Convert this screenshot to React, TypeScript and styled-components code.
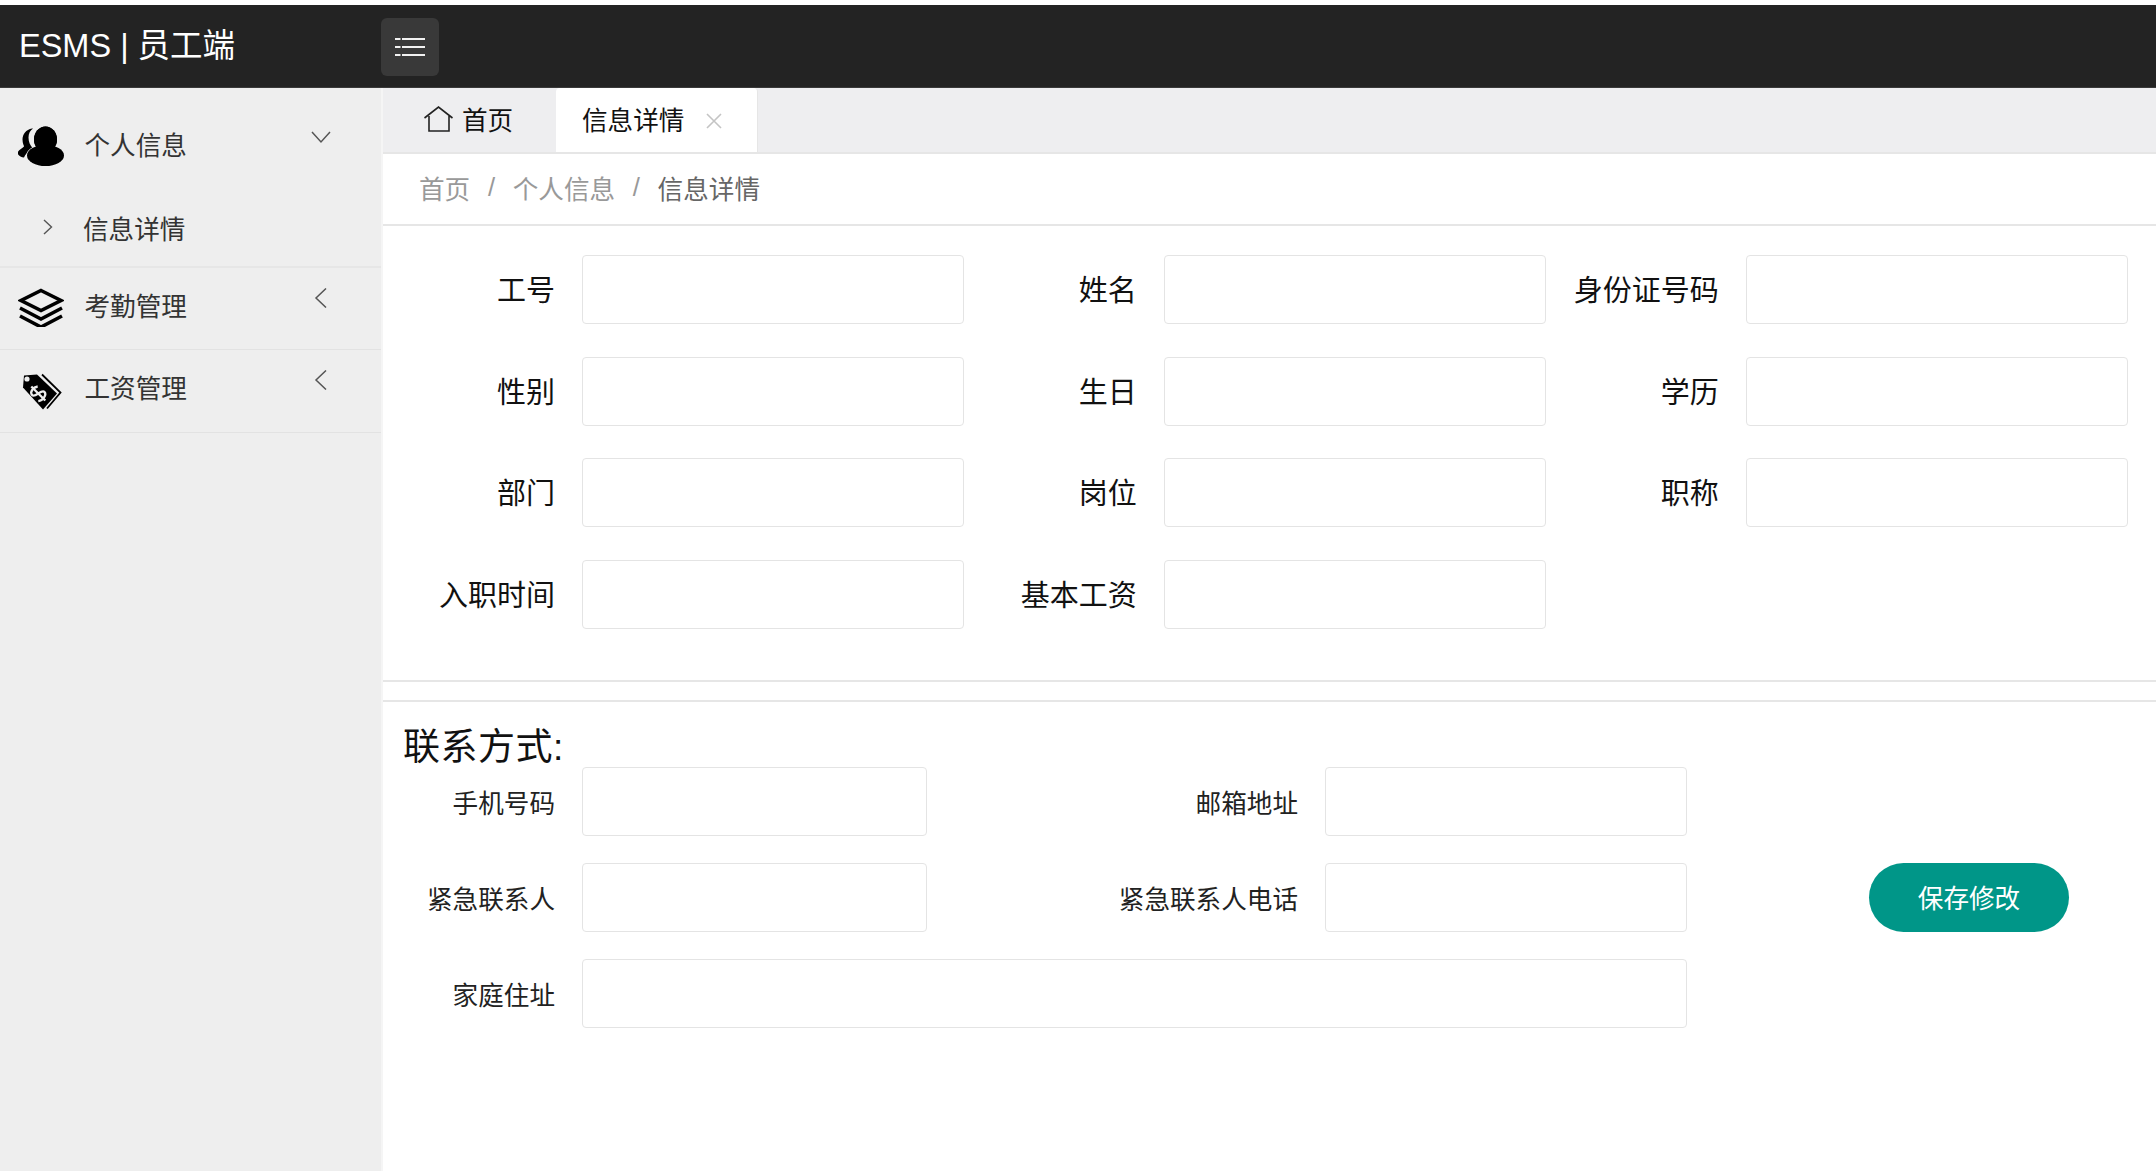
import React from "react";
import styled, { createGlobalStyle } from "styled-components";

const FONT = `"Liberation Sans", "Noto Sans CJK SC", sans-serif`;

const Global = createGlobalStyle`
  html, body { margin: 0; padding: 0; background: #fff; }
  body { font-family: ${FONT}; }
  * { box-sizing: border-box; }
`;

const Page = styled.div`
  width: 2156px;
  height: 1171px;
  padding-top: 5px;
  display: flex;
  flex-direction: column;
  overflow: hidden;
`;

const Header = styled.header`
  height: 83px;
  flex: none;
  background: #232323;
  display: flex;
  align-items: center;
  border-bottom: 1px solid #3a3a3a;
`;

const Brand = styled.div`
  width: 381px;
  padding: 0 0 8px 19px;
  color: #fff;
  font-size: 32.5px;
  white-space: nowrap;
`;

const MenuButton = styled.button`
  width: 58px;
  height: 58px;
  margin-top: 2px;
  padding: 0;
  border: 0;
  border-radius: 6px;
  background: #393939;
  display: flex;
  align-items: center;
  justify-content: center;
`;

const Body = styled.div`
  flex: 1;
  display: flex;
  min-height: 0;
`;

const Sidebar = styled.aside`
  width: 383px;
  flex: none;
  background: #eeeeee;
  border-right: 2px solid #f5f5f5;
`;

const NavGroup = styled.div<{ $thick?: boolean }>`
  border-bottom: ${(p) => (p.$thick ? "2px solid #e6e6e6" : "1px solid #e2e2e2")};
`;

const NavItem = styled.div<{ $h: number; $pb: number }>`
  height: ${(p) => p.$h}px;
  padding: 0 50px ${(p) => p.$pb}px 18px;
  display: flex;
  align-items: center;
  color: #333;
  font-size: 25.6px;
`;

const NavIcon = styled.svg`
  width: 46px;
  height: 46px;
  flex: none;
  margin-right: 20.5px;
`;

const NavChevron = styled.svg`
  width: 20px;
  height: 20px;
  flex: none;
  margin-left: auto;
  margin-bottom: 13px;
`;

const SubItem = styled.div`
  height: 65px;
  padding: 0 0 13px 43px;
  display: flex;
  align-items: center;
  color: #333;
  font-size: 25.6px;
`;

const SubChevron = styled.svg`
  width: 10px;
  height: 16px;
  flex: none;
  margin-right: 30px;
`;

const Main = styled.main`
  flex: 1;
  min-width: 0;
  display: flex;
  flex-direction: column;
`;

const TabBar = styled.div`
  height: 66px;
  flex: none;
  background: #eeeef0;
  border-bottom: 2px solid #e6e6e6;
  display: flex;
  align-items: flex-end;
`;

const HomeTab = styled.div`
  width: 173px;
  height: 64px;
  padding: 0 0 3px 41px;
  display: flex;
  align-items: center;
  gap: 9px;
  color: #111;
  font-size: 25.6px;
`;

const ActiveTab = styled.div`
  width: 202px;
  height: 64px;
  padding: 0 0 3px 26px;
  background: #fff;
  border-radius: 4px 4px 0 0;
  border-right: 1px solid #e6e6e6;
  display: flex;
  align-items: center;
  color: #111;
  font-size: 25.6px;
`;

const CloseIcon = styled.svg`
  width: 16px;
  height: 16px;
  margin: 4px 0 0 22px;
  flex: none;
`;

const Breadcrumb = styled.nav`
  height: 72px;
  flex: none;
  padding: 0 0 3px 36px;
  border-bottom: 2px solid #e6e6e6;
  display: flex;
  align-items: center;
  color: #999;
  font-size: 25.6px;
`;

const Crumb = styled.span<{ $current?: boolean }>`
  color: ${(p) => (p.$current ? "#666" : "#999")};
`;

const Sep = styled.span`
  width: 42.5px;
  text-align: center;
  color: #999;
`;

const InfoGrid = styled.section`
  padding-top: 29px;
  display: grid;
  grid-template-columns: repeat(3, 581.3px);
  column-gap: 0.55px;
  grid-auto-rows: 69px;
  row-gap: 32.67px;
`;

const Field = styled.div`
  display: flex;
  align-items: center;
  min-width: 0;
`;

const FieldLabel = styled.label`
  width: 172px;
  margin-right: 27px;
  padding-bottom: 3px;
  flex: none;
  text-align: right;
  color: #111;
  font-size: 29px;
  white-space: nowrap;
`;

const TextInput = styled.input`
  display: block;
  flex: 1;
  min-width: 0;
  width: 100%;
  height: 100%;
  padding: 0 14px;
  border: 1px solid #e4e4e4;
  border-radius: 4px;
  background: #fff;
  outline: none;
`;

const Rule = styled.hr<{ $top: number }>`
  height: 2px;
  margin: ${(p) => p.$top}px 0 0;
  border: 0;
  background: #e6e6e6;
`;

const ContactTitle = styled.h2`
  margin: 24px 0 0 20px;
  height: 41px;
  line-height: 43px;
  color: #111;
  font-size: 37px;
  font-weight: 400;
  letter-spacing: 0.5px;
  white-space: nowrap;
`;

const ContactGrid = styled.section`
  display: grid;
  grid-template-columns: 172px 345px 344px 362px 1fr;
  grid-auto-rows: 69px;
  column-gap: 27px;
  row-gap: 27px;
  align-items: stretch;
`;

const ContactLabel = styled.label`
  align-self: center;
  padding-bottom: 1px;
  text-align: right;
  color: #222;
  font-size: 25.6px;
  white-space: nowrap;
`;

const WideInput = styled(TextInput)`
  grid-column: 2 / 5;
`;

const SaveCell = styled.div`
  padding-left: 155px;
`;

const SaveButton = styled.button`
  width: 200px;
  height: 69px;
  padding: 0 0 2px;
  border: 0;
  border-radius: 35px;
  background: #009688;
  color: #fff;
  font-family: ${FONT};
  font-size: 25.6px;
`;

const Spacer = styled.div``;

const info = ["工号", "姓名", "身份证号码", "性别", "生日", "学历", "部门", "岗位", "职称", "入职时间", "基本工资"];

const Chevron = ({ dir }: { dir: "down" | "left" }) => (
  <NavChevron viewBox="0 0 20 20">
    <polyline
      points={dir === "down" ? "1,5 10,15 19,5" : "15,0.5 5,10 15,19.5"}
      fill="none"
      stroke="#555"
      strokeWidth="1.5"
    />
  </NavChevron>
);

export default function App() {
  return (
    <Page>
      <Global />
      <Header>
        <Brand>ESMS | 员工端</Brand>
        <MenuButton aria-label="menu">
          <svg width="30" height="18" viewBox="0 0 30 18">
            <g fill="#f2f2f2">
              <rect x="0" y="0" width="5.5" height="2" />
              <rect x="7" y="0" width="23" height="2" />
              <rect x="0" y="8" width="5.5" height="2" />
              <rect x="7" y="8" width="23" height="2" />
              <rect x="0" y="16" width="5.5" height="2" />
              <rect x="7" y="16" width="23" height="2" />
            </g>
          </svg>
        </MenuButton>
      </Header>
      <Body>
        <Sidebar>
          <NavGroup $thick>
            <NavItem $h={113} $pb={3}>
              <NavIcon viewBox="18 120.5 46 46">
                <path d="M32 129C26 130 22.5 135 22.5 140C22.5 144 24 146 24 147C22 149 17.5 151 17.5 154C18.5 156 21 158 24 158C25 155 28 152 33 149C30 146 28.5 142 28.5 138C28.5 134 30 131 33 129Z" />
                <g stroke="#eee" strokeWidth="1.5" paintOrder="stroke">
                  <ellipse cx="45.5" cy="140" rx="11.5" ry="13" />
                  <ellipse cx="45.5" cy="156" rx="18.5" ry="10.5" />
                </g>
                <ellipse cx="45.5" cy="140" rx="11.5" ry="13" />
              </NavIcon>
              个人信息
              <Chevron dir="down" />
            </NavItem>
            <SubItem>
              <SubChevron viewBox="0 0 10 16">
                <polyline points="1,1 8.5,8 1,15" fill="none" stroke="#555" strokeWidth="1.4" />
              </SubChevron>
              信息详情
            </SubItem>
          </NavGroup>
          <NavGroup>
            <NavItem $h={81} $pb={9}>
              <NavIcon viewBox="18 281 46 46">
                <g fill="none" stroke="#000" strokeWidth="3.6">
                  <polygon points="41,290.5 61,300.5 41,310.5 21,300.5" />
                  <polyline points="20,308 41,319 62,308" />
                  <polyline points="20,316 41,327 62,316" />
                </g>
              </NavIcon>
              考勤管理
              <Chevron dir="left" />
            </NavItem>
          </NavGroup>
          <NavGroup>
            <NavItem $h={82} $pb={9}>
              <NavIcon viewBox="18 363.5 46 46">
                <path d="M24 375L37 374L57 393L43 409L23 387Z" />
                <polyline points="42,374 60.5,392 47,408" fill="none" stroke="#000" strokeWidth="1.8" />
                <circle cx="27" cy="378.5" r="2.6" fill="#eee" />
                <path
                  transform="translate(38.3 393) rotate(-45) scale(0.9)"
                  d="M5 -6C1 -9 -6 -8 -6 -3.5C-6 1 6 -1 6 3.5C6 8 -2 9 -6 6M0 -11V11"
                  fill="none"
                  stroke="#eee"
                  strokeWidth="2.6"
                />
              </NavIcon>
              工资管理
              <Chevron dir="left" />
            </NavItem>
          </NavGroup>
        </Sidebar>
        <Main>
          <TabBar>
            <HomeTab>
              <svg width="29" height="26" viewBox="0 0 29 26">
                <path
                  d="M0.5 12L14.5 1L28.5 12M5 10V25H25V10"
                  fill="none"
                  stroke="#222"
                  strokeWidth="1.6"
                />
              </svg>
              首页
            </HomeTab>
            <ActiveTab>
              信息详情
              <CloseIcon viewBox="0 0 16 16">
                <path d="M1 1L15 15M15 1L1 15" stroke="#c4c4c4" strokeWidth="1.6" fill="none" />
              </CloseIcon>
            </ActiveTab>
          </TabBar>
          <Breadcrumb>
            <Crumb>首页</Crumb>
            <Sep>/</Sep>
            <Crumb>个人信息</Crumb>
            <Sep>/</Sep>
            <Crumb $current>信息详情</Crumb>
          </Breadcrumb>
          <InfoGrid>
            {info.map((label) => (
              <Field key={label}>
                <FieldLabel>{label}</FieldLabel>
                <TextInput />
              </Field>
            ))}
          </InfoGrid>
          <Rule $top={51.5} />
          <Rule $top={18} />
          <ContactTitle>联系方式:</ContactTitle>
          <ContactGrid>
            <ContactLabel>手机号码</ContactLabel>
            <TextInput />
            <ContactLabel>邮箱地址</ContactLabel>
            <TextInput />
            <Spacer />
            <ContactLabel>紧急联系人</ContactLabel>
            <TextInput />
            <ContactLabel>紧急联系人电话</ContactLabel>
            <TextInput />
            <SaveCell>
              <SaveButton>保存修改</SaveButton>
            </SaveCell>
            <ContactLabel>家庭住址</ContactLabel>
            <WideInput />
          </ContactGrid>
        </Main>
      </Body>
    </Page>
  );
}
